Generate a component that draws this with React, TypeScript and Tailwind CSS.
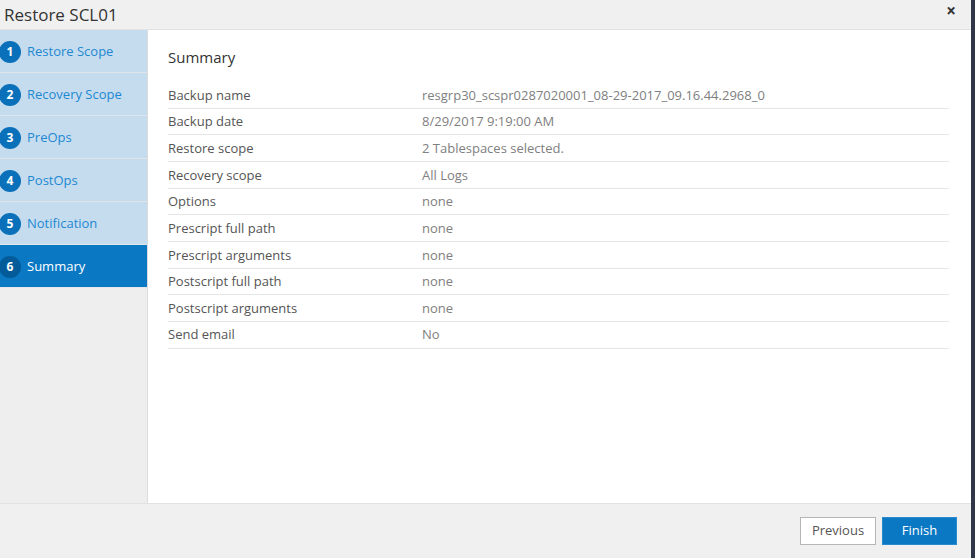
import React from "react";

const steps = [
  "Restore Scope",
  "Recovery Scope",
  "PreOps",
  "PostOps",
  "Notification",
  "Summary",
];

const rows: [string, string][] = [
  ["Backup name", "resgrp30_scspr0287020001_08-29-2017_09.16.44.2968_0"],
  ["Backup date", "8/29/2017 9:19:00 AM"],
  ["Restore scope", "2 Tablespaces selected."],
  ["Recovery scope", "All Logs"],
  ["Options", "none"],
  ["Prescript full path", "none"],
  ["Prescript arguments", "none"],
  ["Postscript full path", "none"],
  ["Postscript arguments", "none"],
  ["Send email", "No"],
];

export default function App() {
  return (
    <div
      className="flex h-[558px] w-[975px] overflow-hidden bg-[#323a4a]"
      style={{ fontFamily: '"Open Sans", "Noto Sans", sans-serif' }}
    >
      <div className="flex h-full w-[971px] flex-col bg-white">
        {/* Header */}
        <div className="flex h-[30px] shrink-0 items-center justify-between border-b border-[#e2e2e2] bg-[#f0f0f0] pl-[4px] pr-[15px]">
          <span className="text-[17px] leading-none text-[#333]">Restore SCL01</span>
          <span className="-mt-[8px] text-[17px] font-bold leading-none text-[#333]">×</span>
        </div>
        {/* Body */}
        <div className="flex min-h-0 flex-1">
          {/* Sidebar */}
          <div className="flex w-[148px] shrink-0 flex-col border-r border-[#dcdcdc] bg-[#eeeeee]">
            {steps.map((s, i) => {
              const active = i === 5;
              return (
                <div
                  key={s}
                  className={
                    active
                      ? "flex h-[43px] items-center gap-[6px] border-b border-[#e4e8ec] bg-[#0a78c3] pt-[1px]"
                      : "flex h-[43px] items-center gap-[6px] border-b border-[#dfe5ea] bg-[#c5dcee] pt-[1px]"
                  }
                >
                  <div
                    className={
                      active
                        ? "-ml-[1px] flex h-[22px] w-[22px] items-center justify-center rounded-full bg-[#035b99] text-[12px] font-bold text-white"
                        : "-ml-[1px] flex h-[22px] w-[22px] items-center justify-center rounded-full bg-[#0a70ba] text-[12px] font-bold text-white"
                    }
                  >
                    {i + 1}
                  </div>
                  <span
                    className={
                      active ? "text-[13px] text-white" : "text-[13px] text-[#1e88d2]"
                    }
                  >
                    {s}
                  </span>
                </div>
              );
            })}
          </div>
          {/* Content */}
          <div className="flex-1 pl-[20px] pr-[22px] pt-[17px]">
            <div className="h-[35px] text-[15px] leading-[20px] text-[#333]">Summary</div>
            <div>
              {rows.map(([k, v]) => (
                <div
                  key={k}
                  className="flex h-[26.67px] items-center border-b border-[#e6e6e6] pt-[1px] text-[13px]"
                >
                  <span className="w-[254px] text-[#555]">{k}</span>
                  <span className="text-[#808080]">{v}</span>
                </div>
              ))}
            </div>
          </div>
        </div>
        {/* Footer */}
        <div className="flex h-[55px] shrink-0 items-center justify-end gap-[6px] border-t border-[#e2e2e2] bg-[#f0f0f0] pr-[14px]">
          <button className="h-[28px] w-[76px] border border-[#b5b5b5] bg-white text-[13px] text-[#555]">
            Previous
          </button>
          <button className="h-[28px] w-[75px] border border-[#2a8ad0] bg-[#0a78c3] text-[13px] text-white">
            Finish
          </button>
        </div>
      </div>
      <div className="h-full flex-1 bg-[#2f3647]" />
    </div>
  );
}
